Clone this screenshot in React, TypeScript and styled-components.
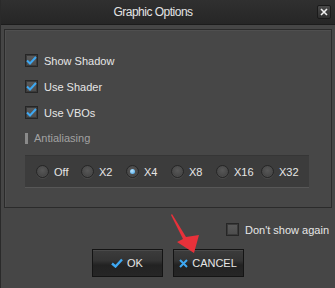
import React, { useState } from "react";
import styled, { createGlobalStyle } from "styled-components";

const GlobalStyle = createGlobalStyle`
  html, body {
    margin: 0;
    padding: 0;
    background: #454545;
  }
  body {
    font-family: "Liberation Sans", Arial, sans-serif;
    font-size: 11px;
  }
`;

const Dialog = styled.div`
  position: relative;
  width: 335px;
  height: 288px;
  background: #464646;
  border-left: 1px solid #2a2a2a;
  box-sizing: border-box;
  display: flex;
  flex-direction: column;
  overflow: hidden;
`;

const TitleBar = styled.div`
  height: 24px;
  flex-shrink: 0;
  background: linear-gradient(#303030, #262626);
  border-bottom: 1px solid #1c1c1c;
  display: flex;
  align-items: center;
  justify-content: center;
  position: relative;
`;

const Title = styled.span`
  color: #e4e4e4;
  font-size: 12px;
  letter-spacing: -0.5px;
  margin-left: -30px;
`;

const CloseButton = styled.button`
  position: absolute;
  right: 4px;
  top: 5px;
  width: 14px;
  height: 14px;
  padding: 0;
  border: 1px solid #1a1a1a;
  border-radius: 2px;
  background: linear-gradient(#4a4a4a, #2e2e2e);
  display: flex;
  align-items: center;
  justify-content: center;
  cursor: pointer;
`;

const Body = styled.div`
  flex: 1;
  display: flex;
  flex-direction: column;
  padding: 4px 3px 0 3px;
`;

const GroupBox = styled.div`
  height: 179px;
  box-sizing: border-box;
  border: 1px solid #2b2b2b;
  box-shadow: inset 1px 1px 0 #4f4f4f;
  background: #474747;
  padding: 24px 20px 0 20px;
  display: flex;
  flex-direction: column;
`;

const CheckRow = styled.label<{ $gap?: number }>`
  display: flex;
  align-items: center;
  gap: 6px;
  height: 13px;
  margin-bottom: ${(p) => p.$gap ?? 13}px;
  color: #e6e6e6;
  cursor: pointer;
`;

const Box = styled.span`
  width: 13px;
  height: 13px;
  box-sizing: border-box;
  border: 1px solid #262626;
  background: linear-gradient(#5a5a5a, #4c4c4c);
  box-shadow: inset 0 0 0 1px #3a3a3a;
  display: flex;
  align-items: center;
  justify-content: center;
  flex-shrink: 0;
`;

const SectionLabel = styled.div`
  display: flex;
  align-items: center;
  gap: 6px;
  height: 12px;
  color: #a2a2a2;
  margin-top: 0;
  margin-bottom: 11px;

  &::before {
    content: "";
    width: 3px;
    height: 11px;
    background: #8a8a8a;
  }
`;

const RadioGroup = styled.div`
  width: 284px;
  height: 33px;
  box-sizing: border-box;
  background: #3c3c3c;
  border-top: 1px solid #363636;
  border-bottom: 1px solid #575757;
  display: flex;
  align-items: center;
  padding-left: 11px;
`;

const RadioItem = styled.label`
  width: 45px;
  display: flex;
  align-items: center;
  gap: 5px;
  color: #e6e6e6;
  cursor: pointer;
`;

const RadioCircle = styled.span<{ $on: boolean }>`
  width: 13px;
  height: 13px;
  border-radius: 50%;
  box-sizing: border-box;
  border: 1px solid #262626;
  background: radial-gradient(circle at 50% 40%, #585858 0%, #3e3e3e 100%);
  box-shadow: inset 0 -1px 0 #4c4c4c, 0 1px 0 #4a4a4a;
  display: flex;
  align-items: center;
  justify-content: center;
  flex-shrink: 0;

  &::after {
    content: "";
    display: ${(p) => (p.$on ? "block" : "none")};
    width: 5px;
    height: 5px;
    border-radius: 50%;
    background: radial-gradient(circle at 40% 35%, #bfe6ff, #3aa3ec);
  }
`;

const BottomRow = styled.div`
  display: flex;
  justify-content: flex-end;
  padding: 15px 3px 0 0;
`;

const ButtonRow = styled.div`
  display: flex;
  justify-content: center;
  gap: 10px;
  margin-top: 13px;
  padding-right: 1px;
`;

const DialogButton = styled.button`
  width: 71px;
  height: 28px;
  box-sizing: border-box;
  border: 1px solid #141414;
  background: linear-gradient(#3c3c3c 0%, #343434 40%, #222 58%, #262626 100%);
  box-shadow: inset 0 1px 0 #4a4a4a;
  color: #e6e6e6;
  font-family: "Liberation Sans", Arial, sans-serif;
  font-size: 11px;
  display: flex;
  align-items: center;
  justify-content: center;
  gap: 4px;
  padding: 0;
  cursor: pointer;
`;

const Arrow = styled.svg`
  position: absolute;
  left: 165px;
  top: 210px;
  pointer-events: none;
`;

const Check = () => (
  <svg width="11" height="9" viewBox="0 0 11 9">
    <path d="M1 4.5 L4 7.5 L10 1" stroke="#3ea8f2" strokeWidth="2" fill="none" />
  </svg>
);

const options = ["Off", "X2", "X4", "X8", "X16", "X32"];

const App: React.FC = () => {
  const [flags, setFlags] = useState({ shadow: true, shader: true, vbo: true, dontShow: false });
  const [aa, setAa] = useState("X4");

  const toggle = (k: keyof typeof flags) => setFlags({ ...flags, [k]: !flags[k] });

  return (
    <>
      <GlobalStyle />
      <Dialog>
        <TitleBar>
          <Title>Graphic Options</Title>
          <CloseButton>
            <svg width="8" height="8" viewBox="0 0 8 8">
              <path d="M1 1 L7 7 M7 1 L1 7" stroke="#f0f0f0" strokeWidth="1.6" />
            </svg>
          </CloseButton>
        </TitleBar>

        <Body>
          <GroupBox>
            <CheckRow onClick={() => toggle("shadow")}>
              <Box>{flags.shadow && <Check />}</Box>
              Show Shadow
            </CheckRow>
            <CheckRow onClick={() => toggle("shader")}>
              <Box>{flags.shader && <Check />}</Box>
              Use Shader
            </CheckRow>
            <CheckRow onClick={() => toggle("vbo")}>
              <Box>{flags.vbo && <Check />}</Box>
              Use VBOs
            </CheckRow>

            <SectionLabel>Antialiasing</SectionLabel>
            <RadioGroup>
              {options.map((o) => (
                <RadioItem key={o} onClick={() => setAa(o)}>
                  <RadioCircle $on={aa === o} />
                  {o}
                </RadioItem>
              ))}
            </RadioGroup>
          </GroupBox>

          <BottomRow>
            <CheckRow $gap={0} onClick={() => toggle("dontShow")}>
              <Box>{flags.dontShow && <Check />}</Box>
              Don't show again
            </CheckRow>
          </BottomRow>

          <ButtonRow>
            <DialogButton>
              <svg width="12" height="10" viewBox="0 0 12 10">
                <path d="M1 5.5 L4.5 8.5 L11 1.5" stroke="#3ea8f2" strokeWidth="2.4" fill="none" />
              </svg>
              OK
            </DialogButton>
            <DialogButton>
              <svg width="9" height="9" viewBox="0 0 9 9">
                <path d="M1 1 L8 8 M8 1 L1 8" stroke="#3ea8f2" strokeWidth="2" />
              </svg>
              CANCEL
            </DialogButton>
          </ButtonRow>
        </Body>

        <Arrow width="40" height="46" viewBox="0 0 40 46">
          <polygon
            points="6,4 20,27 33,25 28,43 11,32 17,29 5,5"
            fill="#e8313a"
          />
        </Arrow>
      </Dialog>
    </>
  );
};

export default App;
